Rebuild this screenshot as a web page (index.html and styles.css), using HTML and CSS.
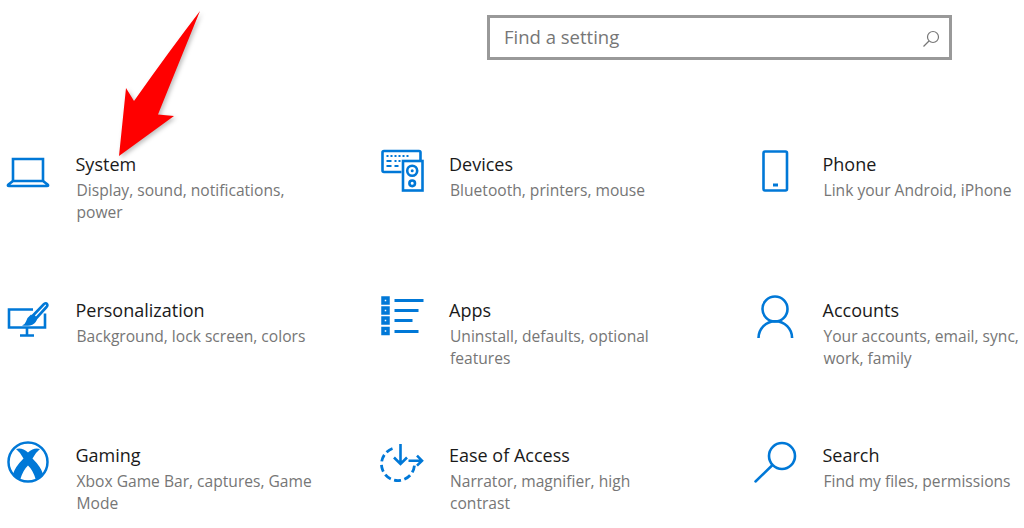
FILE: index.html
```html
<!DOCTYPE html>
<html lang="en">
<head>
<meta charset="utf-8">
<title>Settings</title>
<link rel="stylesheet" href="styles.css">
</head>
<body>
<header class="top">
  <div class="search">
    <span class="search-text">Find a setting</span>
    <svg class="search-icon" viewBox="920 25 24 24"><circle cx="933" cy="36" r="5.500"/><path d="M929 40l-5.500 5.500"/></svg>
  </div>
</header>
<main class="grid">
  <section class="item">
    <svg class="icon" viewBox="4 147 48 48"><path d="M13 181v-22h30v22"/><path d="M13 181l-4.500 3.500q-1.500 1.500.5 1.500h38q2 0 .5-1.500L43 181z"/></svg>
    <div class="copy"><h2>System</h2><p>Display, sound, notifications, power</p></div>
  </section>
  <section class="item">
    <svg class="icon" viewBox="377.500 147 48 48"><path d="M401 172h-17.500q-1.500 0-1.500-1.500V152.500q0-1.500 1.500-1.500h35q1.500 0 1.500 1.500V160"/><path class="dots" d="M386 156h2m2 0h2m2 0h2m2 0h2m2 0h2m2 0h2M386 161h5m3 0h2m2 0h2M386 166h5m3 0h4"/><rect x="402.500" y="161" width="19.500" height="29.500"/><circle cx="411.700" cy="170.700" r="5"/><circle class="fill" cx="411.700" cy="170.700" r="1.500"/><circle cx="411.700" cy="183.300" r="2.800"/></svg>
    <div class="copy"><h2>Devices</h2><p>Bluetooth, printers, mouse</p></div>
  </section>
  <section class="item">
    <svg class="icon" viewBox="751 147 48 48"><rect x="763.500" y="151.500" width="23.500" height="39" rx="1.500"/><path class="btn" d="M773 185h5"/></svg>
    <div class="copy"><h2>Phone</h2><p>Link your Android, iPhone</p></div>
  </section>
  <section class="item">
    <svg class="icon" viewBox="4 292.500 48 48"><path d="M33 309H9v18h36v-14"/><path d="M27 327v8M20 335h14"/><path d="M33 315l11-11.500q2-1.500 3 0q1 1.500-.5 3L36 318z"/><path class="fill" d="M31 314l6 5q-2 5-7 6q-4 .5-8 0q3-1 4-4q1-4 5-7z"/></svg>
    <div class="copy"><h2>Personalization</h2><p>Background, lock screen, colors</p></div>
  </section>
  <section class="item">
    <svg class="icon" viewBox="377.500 292.500 48 48"><path class="sq" d="M382.500 297.500h5v5h-5zM382.500 307.500h5v5h-5zM382.500 317.500h5v5h-5zM382.500 328h5v5h-5z"/><path class="thick" d="M394 300h29M394 310h24M394 320h18M394 331h24"/></svg>
    <div class="copy"><h2>Apps</h2><p>Uninstall, defaults, optional features</p></div>
  </section>
  <section class="item">
    <svg class="icon" viewBox="751 292.500 48 48"><circle cx="775" cy="308.500" r="12.500"/><path d="M758.500 337.500a16.800 16.800 0 0 1 33.600 0"/></svg>
    <div class="copy"><h2>Accounts</h2><p>Your accounts, email, sync, work, family</p></div>
  </section>
  <section class="item">
    <svg class="icon" viewBox="4 438 48 48"><circle class="ring" cx="28" cy="462" r="19.500"/><path class="fill" d="M16 449Q22 447 28 452.500Q34 447 40 449Q35 453 32.500 458.500Q41 467 43 474Q39 479 36 480Q33 470 28 465.500Q23 470 20 480Q16 479 13 474Q15 467 23.500 458.500Q21 453 16 449z"/></svg>
    <div class="copy"><h2>Gaming</h2><p>Xbox Game Bar, captures, Game Mode</p></div>
  </section>
  <section class="item">
    <svg class="icon" viewBox="377.500 438 48 48"><path class="dash" d="M392 448.500a16.500 16.500 0 1 0 22 15"/><path d="M400 444v20M393.500 457.500l6.500 6.500 6.500-6.500M408 460.700h13M416.500 455.700l5 5-5 5"/></svg>
    <div class="copy"><h2>Ease of Access</h2><p>Narrator, magnifier, high contrast</p></div>
  </section>
  <section class="item">
    <svg class="icon" viewBox="751 438 48 48"><circle cx="782" cy="456" r="13"/><path class="round" d="M772 465.500L755.500 481.500"/></svg>
    <div class="copy"><h2>Search</h2><p>Find my files, permissions</p></div>
  </section>
</main>
<svg class="arrow" viewBox="110 5 100 160"><path d="M200 11Q178 65 158 114.500L174 116L119 156L126 88L134 101Q170 50 200 11z"/></svg>
</body>
</html>
```
FILE: styles.css
```css
* { box-sizing: border-box; }
html, body { margin: 0; height: 528px; overflow: hidden; background: #fff; }
body { font-family: "Open Sans", "Noto Sans", sans-serif; position: relative; }
.top { height: 147px; padding: 15px 0 0 487px; }
.search {
  width: 465px; height: 45px; border: 3px solid #999;
  display: flex; align-items: center; justify-content: space-between;
  padding: 0 5px 2px 14px; color: #767676; font-size: 18.500px;
}
.search-icon { width: 24px; height: 24px; margin-top: 2px; fill: none; stroke: #767676; stroke-width: 1.200; }
.grid {
  display: grid; height: 381px;
  grid-template-columns: 373.500px 373.500px 1fr;
  grid-template-rows: 145.500px 145.500px 1fr;
  padding-left: 4px;
}
.item { display: flex; gap: 23.500px; align-items: flex-start; min-width: 0; }
.icon { width: 48px; height: 48px; flex: none; fill: none; stroke: #0078d7; stroke-width: 2.600; }
.icon .fill { fill: #0078d7; stroke: none; }
.icon .dots { stroke-width: 2.200; }
.icon .btn { stroke-width: 3; }
.icon .sq { stroke-width: 3.500; }
.icon .thick { stroke-width: 2.800; }
.icon .ring { stroke-width: 2.500; }
.icon .dash { stroke-dasharray: 7 3.500; stroke-width: 2.800; }
.icon .round { stroke-linecap: round; stroke-width: 2.500; }
.copy { flex: 1; min-width: 0; padding-top: 4px; }
h2 { margin: 0; font-size: 18px; line-height: 26px; font-weight: 400; color: #1a1a1a; }
p { margin: 2px 0 0 1px; max-width: 237px; font-size: 15.600px; line-height: 22px; color: #767676; }
.arrow {
  position: absolute; left: 110px; top: 5px; width: 100px; height: 160px;
  fill: #f00; filter: drop-shadow(2px 2px 2px rgba(0,0,0,.25));
}
```
